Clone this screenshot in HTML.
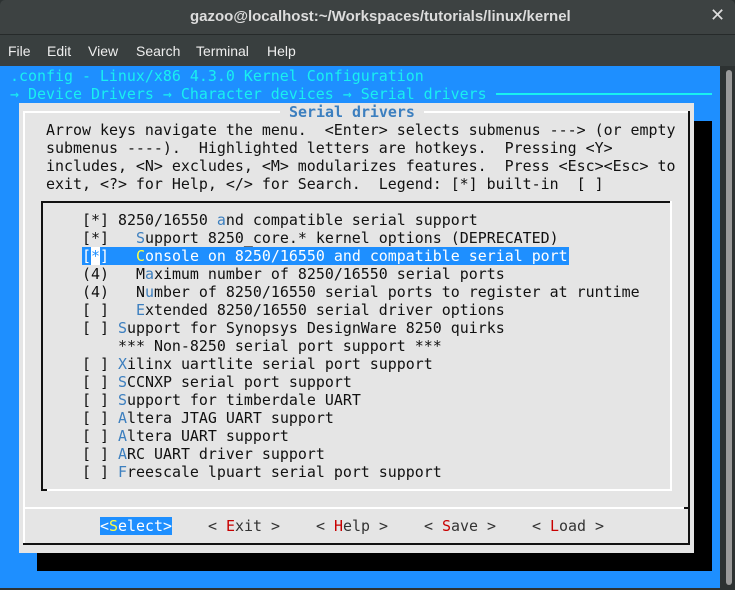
<!DOCTYPE html>
<html><head><meta charset="utf-8"><style>
*{margin:0;padding:0}
body{width:735px;height:590px;overflow:hidden;background:#2d3232;position:relative;font-family:"DejaVu Sans Mono","Liberation Mono",monospace}
.a{position:absolute}
.r{position:absolute;white-space:pre;font-size:14.95px;line-height:18px;height:18px}
.cy{color:#19f0f0}
.k{color:#111}
.h{color:#3c7fbf}
.rd{color:#c80000}
.b{background:#1e8fff}
.ui{font-family:"Liberation Sans","DejaVu Sans",sans-serif}
</style></head><body>
<div class="a" style="left:0;top:0;width:735px;height:34px;background:#3d4242;border-radius:5px 5px 0 0"></div>
<div class="a" style="left:0;top:34px;width:735px;height:1px;background:#262a2a"></div>
<div class="a" style="left:0;top:35px;width:735px;height:31px;background:#393f3f"></div>
<div class="a ui" style="left:190px;top:8px;font-size:15px;font-weight:bold;color:#dcdcdc;white-space:pre">gazoo@localhost:~/Workspaces/tutorials/linux/kernel</div>
<div class="a ui" style="left:710px;top:5px;font-size:18px;font-weight:bold;color:#ddd">✕</div>
<div class="a ui" style="left:8px;top:43px;font-size:14px;color:#eee;white-space:pre">File</div>
<div class="a ui" style="left:47px;top:43px;font-size:14px;color:#eee">Edit</div>
<div class="a ui" style="left:88px;top:43px;font-size:14px;color:#eee">View</div>
<div class="a ui" style="left:136px;top:43px;font-size:14px;color:#eee">Search</div>
<div class="a ui" style="left:196px;top:43px;font-size:14px;color:#eee">Terminal</div>
<div class="a ui" style="left:267px;top:43px;font-size:14px;color:#eee">Help</div>
<div class="a" style="left:0;top:66px;width:720px;height:522px;background:#1e8fff"></div>
<div class="a" style="left:726px;top:70px;width:6px;height:515px;background:#9a9a9a;border-radius:3px"></div>
<div class="r cy" style="left:10px;top:67px">.config - Linux/x86 4.3.0 Kernel Configuration</div>
<div class="r cy" style="left:10px;top:85px">→ Device Drivers → Character devices → Serial drivers</div>
<div class="a" style="left:496px;top:93px;width:216px;height:2px;background:#19f0f0"></div>
<div class="a" style="left:37px;top:121px;width:675px;height:450px;background:#000"></div>
<div class="a" style="left:19px;top:103px;width:675px;height:450px;background:#e5e5e5"></div>
<div class="a" style="left:23px;top:111px;width:667px;height:2px;background:#fff"></div>
<div class="a" style="left:23px;top:111px;width:2px;height:434px;background:#fff"></div>
<div class="a" style="left:688px;top:111px;width:2px;height:434px;background:#111"></div>
<div class="a" style="left:23px;top:543px;width:667px;height:2px;background:#111"></div>
<div class="a" style="left:23px;top:507px;width:665px;height:2px;background:#fff"></div>
<div class="a" style="left:684px;top:507px;width:6px;height:2px;background:#111"></div>
<div class="r" style="left:280px;top:103px;background:#e5e5e5;color:#3c7fbf;font-weight:bold"> Serial drivers </div>
<div class="r k" style="left:46px;top:121px">Arrow keys navigate the menu.  &lt;Enter&gt; selects submenus ---&gt; (or empty</div>
<div class="r k" style="left:46px;top:139px">submenus ----).  Highlighted letters are hotkeys.  Pressing &lt;Y&gt;</div>
<div class="r k" style="left:46px;top:157px">includes, &lt;N&gt; excludes, &lt;M&gt; modularizes features.  Press &lt;Esc&gt;&lt;Esc&gt; to</div>
<div class="r k" style="left:46px;top:175px">exit, &lt;?&gt; for Help, &lt;/&gt; for Search.  Legend: [*] built-in  [ ]</div>
<div class="a" style="left:41px;top:201px;width:631px;height:2px;background:#111"></div>
<div class="a" style="left:41px;top:201px;width:2px;height:290px;background:#111"></div>
<div class="a" style="left:670px;top:201px;width:2px;height:290px;background:#fff"></div>
<div class="a" style="left:43px;top:489px;width:629px;height:2px;background:#fff"></div>
<div class="a" style="left:41px;top:489px;width:6px;height:2px;background:#111"></div>
<div class="r k" style="left:82px;top:211px">[*] 8250/16550 <span class="h">a</span>nd compatible serial support</div>
<div class="r k" style="left:82px;top:229px">[*]   <span class="h">S</span>upport 8250_core.* kernel options (DEPRECATED)</div>
<div class="r b" style="left:82px;top:247px;color:#fff;width:487px">[<span style="background:#fff;color:#1e8fff">*</span>]   <span style="color:#ffff40">C</span>onsole on 8250/16550 and compatible serial port</div>
<div class="r k" style="left:82px;top:265px">(4)   M<span class="h">a</span>ximum number of 8250/16550 serial ports</div>
<div class="r k" style="left:82px;top:283px">(4)   N<span class="h">u</span>mber of 8250/16550 serial ports to register at runtime</div>
<div class="r k" style="left:82px;top:301px">[ ]   <span class="h">E</span>xtended 8250/16550 serial driver options</div>
<div class="r k" style="left:82px;top:319px">[ ] <span class="h">S</span>upport for Synopsys DesignWare 8250 quirks</div>
<div class="r k" style="left:82px;top:337px">    *** Non-8250 serial port support ***</div>
<div class="r k" style="left:82px;top:355px">[ ] <span class="h">X</span>ilinx uartlite serial port support</div>
<div class="r k" style="left:82px;top:373px">[ ] <span class="h">S</span>CCNXP serial port support</div>
<div class="r k" style="left:82px;top:391px">[ ] <span class="h">S</span>upport for timberdale UART</div>
<div class="r k" style="left:82px;top:409px">[ ] <span class="h">A</span>ltera JTAG UART support</div>
<div class="r k" style="left:82px;top:427px">[ ] <span class="h">A</span>ltera UART support</div>
<div class="r k" style="left:82px;top:445px">[ ] <span class="h">A</span>RC UART driver support</div>
<div class="r k" style="left:82px;top:463px">[ ] <span class="h">F</span>reescale lpuart serial port support</div>
<div class="r b" style="left:100px;top:517px;color:#fff">&lt;<span style="color:#ffff40">S</span>elect&gt;</div>
<div class="r" style="left:208px;top:517px;color:#333">&lt; <span class="rd">E</span>xit &gt;</div>
<div class="r" style="left:316px;top:517px;color:#333">&lt; <span class="rd">H</span>elp &gt;</div>
<div class="r" style="left:424px;top:517px;color:#333">&lt; <span class="rd">S</span>ave &gt;</div>
<div class="r" style="left:532px;top:517px;color:#333">&lt; <span class="rd">L</span>oad &gt;</div>
</body></html>
